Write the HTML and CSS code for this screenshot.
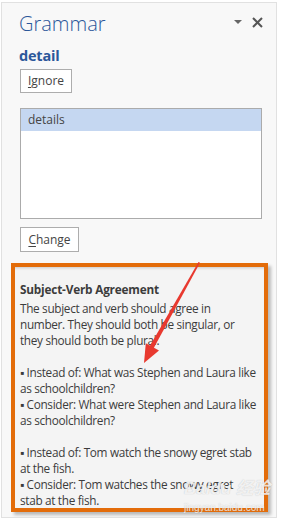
FILE: index.html
```html
<!DOCTYPE html>
<html lang="en">
<head>
    <meta charset="utf-8">
    <meta name="viewport" content="width=device-width, initial-scale=1">
    <link rel="stylesheet" href="styles.css">
    <title>Grammar</title>
</head>
<body>
    <div class="pane">
        <div class="head">
            <h1 class="title">Grammar</h1>
            <span class="drop"></span>
            <svg class="close" width="11" height="11" viewBox="0 0 11 11">
                <path d="M1 1 L10 10 M10 1 L1 10" stroke="#555" stroke-width="2"/>
            </svg>
        </div>
        <div class="word">detail</div>
        <button class="btn btn-ignore"><u>I</u>gnore</button>
        <div class="list">
            <div class="item selected">details</div>
        </div>
        <button class="btn btn-change"><u>C</u>hange</button>
        <div class="card">
            <div class="rule">Subject-Verb Agreement</div>
            <p>The subject and verb should agree in<br>number. They should both be singular, or<br>they should both be plural.</p>
            <p>&#9642; Instead of: What was Stephen and Laura like<br>as schoolchildren?<br>&#9642; Consider: What were Stephen and Laura like<br>as schoolchildren?</p>
            <p>&#9642; Instead of: Tom watch the snowy egret stab<br>at the fish.<br>&#9642; Consider: Tom watches the snowy egret<br>stab at the fish.</p>
        </div>
        <div class="mark">
            <div class="mark-big">Baidu 经验</div>
            <div class="mark-url">jingyan.baidu.com</div>
        </div>
    </div>
    <svg class="arrow" width="299" height="523" viewBox="0 0 299 523">
        <polygon points="198.5,262 200,262.8 153.5,348.5 149.5,346.5" fill="#e8392f"/>
        <polygon points="144,363 145.8,343.2 159,350.6" fill="#e8392f"/>
    </svg>
</body>
</html>
```

FILE: styles.css
```css
* { margin: 0; padding: 0; box-sizing: border-box; }
html, body { width: 100%; height: 100%; background: #fff; }
body { position: relative; font-family: "Open Sans", "Noto Sans", sans-serif; color: #444; }
.pane { position: relative; margin: 2px 0 0 1px; width: 276px; height: 516px; border: 1px solid #e1e1e1; background: #f8f8f8; padding: 4px 0 0 17px; overflow: hidden; }
.head { display: flex; align-items: center; height: 34px; }
.title { font-size: 20px; font-weight: 300; color: #2b579a; line-height: 30px; flex: 1; }
.drop { width: 0; height: 0; border-left: 4px solid transparent; border-right: 4px solid transparent; border-top: 4px solid #666; margin-right: 10px; margin-top: -4px; }
.close { margin-right: 13px; margin-top: -4px; }
.word { font-size: 14.5px; font-weight: 700; color: #2b579a; line-height: 20px; margin-top: 5px; letter-spacing: -0.2px; }
.btn { display: block; background: #fff; border: 1px solid #adadad; font-family: inherit; font-size: 12px; color: #444; padding: 0 6px; line-height: 22px; margin-left: 1px; }
.btn-ignore { margin-top: 3px; width: 52px; height: 24px; }
.btn-change { margin-top: 8px; width: 59px; height: 25px; }
.btn u { text-decoration-thickness: 1px; text-underline-offset: 2px; }
.list { margin: 15px 0 0 1px; width: 242px; height: 111px; border: 1px solid #ababab; background: #fff; }
.item { font-size: 12px; line-height: 22px; padding-left: 7px; color: #444; }
.item.selected { background: #c5d7f1; }
.card { margin: 11px 0 0 -8px; width: 257px; height: 249px; border: 4px solid #e36c0a; background: #f4f4f4; padding: 13px 0 0 5px; font-size: 11.8px; line-height: 16px; letter-spacing: -0.33px; white-space: nowrap; box-shadow: 3px 3px 3px rgba(0,0,0,0.25), inset 0 3px 3px -2px rgba(0,0,0,0.18); overflow: hidden; color: #3c3c3c; }
.rule { font-weight: 700; line-height: 18px; margin-bottom: 2px; letter-spacing: -0.2px; }
.card p { margin-bottom: 16px; }
.mark { position: absolute; left: 182px; top: 476px; color: rgba(255,255,255,0.8); text-shadow: 0 0 1px rgba(120,120,120,0.45); font-family: "Liberation Sans", "Noto Sans CJK SC", sans-serif; }
.mark-big { font-size: 17px; font-weight: 700; line-height: 20px; font-style: italic; }
.mark-url { font-size: 10px; line-height: 12px; margin-top: 3px; }
.arrow { position: absolute; left: 0; top: 0; pointer-events: none; }
```
